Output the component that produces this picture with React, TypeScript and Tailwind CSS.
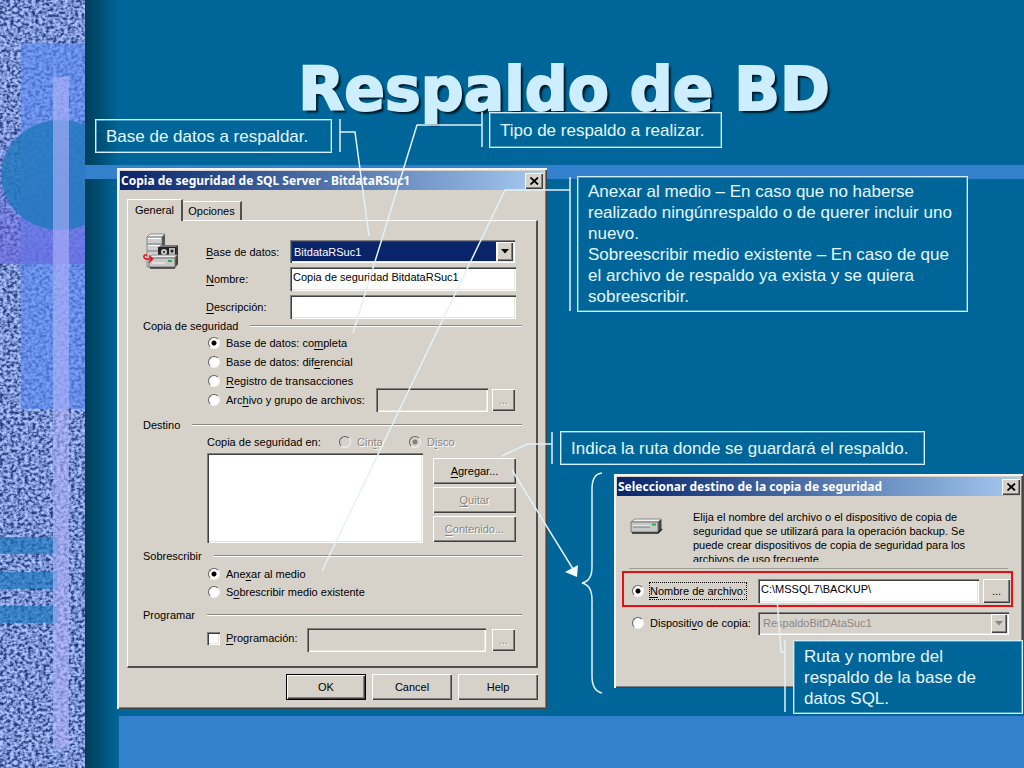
import { useState } from "react";
import type { ReactNode } from "react";
import clsx from "clsx";

const RAISED = "bg-[#d6d2ca] shadow-[inset_1px_1px_#ffffff,inset_-1px_-1px_#404040,inset_-2px_-2px_#808080]";
const SUNKEN = "shadow-[inset_1px_1px_#808080,inset_2px_2px_#404040,inset_-1px_-1px_#ffffff,inset_-2px_-2px_#e8e5df]";
const ETCHED = "text-[#8a8782] [text-shadow:1px_1px_#ffffff]";

/* text with the letter between underscores drawn as the access key */
function Access({ text }: { text: string }) {
    const [before, key, after] = text.split("_");
    return <>{before}<u className="underline-offset-2">{key}</u>{after}</>;
}

function TitleBar({ title }: { title: string }) {
    return (
        <div className="flex h-[19px] items-center justify-between bg-linear-to-r from-[#0a246a] to-[#a6caf0] pl-px">
            <h2 className="whitespace-nowrap font-['Noto_Sans',sans-serif] text-[12px] font-bold text-white">{title}</h2>
            <button aria-label="Cerrar" className={clsx("flex h-4 w-[18px] items-center justify-center", RAISED)}>
                <svg width="9" height="8" viewBox="0 0 9 8" stroke="#000" strokeWidth="1.8">
                    <path d="M0.5 0.5 8 7.5M8 0.5 0.5 7.5" />
                </svg>
            </button>
        </div>
    );
}

function Group({ title, children }: { title: string; children: ReactNode }) {
    return (
        <section>
            <div className="flex h-[14px] items-center gap-3">
                <h3>{title}</h3>
                <div className="h-0.5 flex-1 border-t border-b border-t-[#8a8782] border-b-white" />
            </div>
            {children}
        </section>
    );
}

function Radio({ name, text, checked, disabled, onChange }: { name: string; text: string; checked: boolean; disabled?: boolean; onChange?: () => void }) {
    return (
        <label className={clsx("flex items-center gap-1.5 whitespace-nowrap", disabled && ETCHED)}>
            <input
                type="radio"
                name={name}
                checked={checked}
                disabled={disabled}
                onChange={() => onChange?.()}
                className={clsx(
                    "size-3 shrink-0 appearance-none rounded-full border border-t-[#606060] border-r-[#f4f2ee] border-b-[#f4f2ee] border-l-[#606060]",
                    disabled
                        ? "bg-[#d6d2ca] checked:bg-[radial-gradient(circle,#808080_2px,#d6d2ca_3px)]"
                        : "bg-white checked:bg-[radial-gradient(circle,#000_2px,#fff_3px)]"
                )}
            />
            <span><Access text={text} /></span>
        </label>
    );
}

function Button({ text, disabled, className }: { text: string; disabled?: boolean; className?: string }) {
    return (
        <button disabled={disabled} className={clsx("flex items-center justify-center", RAISED, disabled && ETCHED, className)}>
            <span><Access text={text} /></span>
        </button>
    );
}

function Arrow({ color }: { color: string }) {
    return (
        <span className={clsx("pointer-events-none absolute top-0.5 right-0.5 bottom-0.5 flex w-4 items-center justify-center", RAISED)}>
            <svg width="8" height="5" viewBox="0 0 8 5" fill={color}><path d="M0 0h8L4 4.5z" /></svg>
        </span>
    );
}

function BackupDialog() {
    const [type, setType] = useState(0);
    const [media, setMedia] = useState(0);

    const types: string[] = ["Base de datos: co_m_pleta", "Base de datos: dif_e_rencial", "_R_egistro de transacciones"];

    return (
        <div className="absolute top-[168px] left-[117px] w-[430px] bg-[#d6d2ca] p-[3px] pr-1 pb-[9px] shadow-[inset_2px_2px_#f4f2ee,inset_-1px_-1px_#404040,inset_-2px_-2px_#808080]">
            <TitleBar title="Copia de seguridad de SQL Server - BitdataRSuc1" />

            <div className="mt-2 flex items-end px-[7px]" role="tablist">
                <button role="tab" aria-selected="true" className="relative top-px h-[22px] w-[56px] border-t border-r-2 border-l border-t-white border-r-[#505050] border-l-white bg-[#d6d2ca] pb-0.5">General</button>
                <button role="tab" aria-selected="false" className="h-[19px] w-[59px] border-t border-r-2 border-t-white border-r-[#505050]">Opciones</button>
            </div>

            <div className="mr-[5px] ml-[7px] border-t border-r-2 border-b-2 border-l border-t-white border-r-[#505050] border-b-[#505050] border-l-white pt-3 pr-[14px] pb-3 pl-[15px]">
                <div className="flex">
                    <ServerIcon />
                    <div className="ml-[27px] flex flex-1 flex-col gap-1 pt-[7px]">
                        <div className="flex items-center">
                            <label htmlFor="db" className="w-[84px]"><Access text="_B_ase de datos:" /></label>
                            <div className={clsx("relative h-[23px] w-[225px] bg-white p-0.5", SUNKEN)}>
                                <select id="db" className="block h-[19px] w-[204px] appearance-none bg-[#0a246a] px-0.5 text-white outline-none">
                                    <option>BitdataRSuc1</option>
                                </select>
                                <Arrow color="#000" />
                            </div>
                        </div>
                        <div className="flex items-center">
                            <label htmlFor="name" className="w-[84px]"><Access text="_N_ombre:" /></label>
                            <input id="name" defaultValue="Copia de seguridad BitdataRSuc1" className={clsx("h-6 w-[226px] bg-white px-[3px] pb-1 outline-none", SUNKEN)} />
                        </div>
                        <div className="flex items-center">
                            <label htmlFor="desc" className="w-[84px]"><Access text="_D_escripción:" /></label>
                            <input id="desc" className={clsx("h-6 w-[226px] bg-white px-[3px] outline-none", SUNKEN)} />
                        </div>
                    </div>
                </div>

                <Group title="Copia de seguridad">
                    <div className="flex flex-col pl-[65px]">
                        {types.map((item, i) => (
                            <div className="flex h-[19px] items-center" key={i}>
                                <Radio name="type" text={item} checked={type === i} onChange={() => setType(i)} />
                            </div>
                        ))}
                        <div className="flex h-5 items-center">
                            <div className="w-[168px]">
                                <Radio name="type" text="Arc_h_ivo y grupo de archivos:" checked={type === 3} onChange={() => setType(3)} />
                            </div>
                            <input aria-label="Archivo y grupo de archivos" disabled className={clsx("h-6 w-[112px]", SUNKEN)} />
                            <Button text="..." disabled className="ml-1 h-[22px] w-[23px]" />
                        </div>
                    </div>
                </Group>

                <div className="h-2" />
                <Group title="Destino">
                    <div className="pl-16">
                        <div className="flex h-5 items-center">
                            <span className="w-[132px]">Copia de seguridad en:</span>
                            <div className="w-[70px]"><Radio name="dest" text="Cin_t_a" checked={false} disabled /></div>
                            <Radio name="dest" text="D_i_sco" checked disabled />
                        </div>
                        <div className="flex gap-[10px] pt-px">
                            <select size={4} aria-label="Destinos" className={clsx("h-[90px] w-[216px] appearance-none bg-white outline-none", SUNKEN)} />
                            <div className="flex flex-col gap-[3px] pt-[5px]">
                                <Button text="_A_gregar..." className="h-[26px] w-[83px]" />
                                <Button text="_Q_uitar" disabled className="h-[26px] w-[83px]" />
                                <Button text="_C_ontenido..." disabled className="h-[26px] w-[83px]" />
                            </div>
                        </div>
                    </div>
                </Group>

                <div className="h-1.5" />
                <Group title="Sobrescribir">
                    <div className="flex flex-col pt-0.5 pl-[65px]">
                        <div className="flex h-[18px] items-center">
                            <Radio name="media" text="Ane_x_ar al medio" checked={media === 0} onChange={() => setMedia(0)} />
                        </div>
                        <div className="flex h-[18px] items-center">
                            <Radio name="media" text="S_o_brescribir medio existente" checked={media === 1} onChange={() => setMedia(1)} />
                        </div>
                    </div>
                </Group>

                <div className="h-[7px]" />
                <Group title="Programar">
                    <div className="flex h-8 items-center pt-1 pl-16">
                        <label className="flex w-[100px] items-center gap-1.5 pb-1">
                            <input type="checkbox" className={clsx("size-[13px] appearance-none bg-white checked:bg-[radial-gradient(circle,#000_2px,#fff_3px)]", SUNKEN)} />
                            <span><Access text="_P_rogramación:" /></span>
                        </label>
                        <input aria-label="Programación" disabled className={clsx("h-6 w-[179px]", SUNKEN)} />
                        <Button text="..." disabled className="ml-1.5 h-[22px] w-[23px]" />
                    </div>
                </Group>
            </div>

            <div className="mt-1.5 mr-[5px] flex justify-end gap-1.5">
                <Button text="OK" className="h-[26px] w-20 border border-black" />
                <Button text="Cancel" className="h-[26px] w-20" />
                <Button text="Help" className="h-[26px] w-20" />
            </div>
        </div>
    );
}

function DestinationDialog() {
    const [dest, setDest] = useState(0);

    return (
        <div className="absolute top-[474px] left-[614px] h-[214px] w-[409px] bg-[#d6d2ca] p-[3px] shadow-[inset_2px_2px_#f4f2ee,inset_-1px_-1px_#404040,inset_-2px_-2px_#808080]">
            <TitleBar title="Seleccionar destino de la copia de seguridad" />
            <div className="flex pt-[14px] pl-[13px]">
                <DriveIcon />
                <p className="ml-[30px] h-[52px] w-[300px] overflow-hidden leading-[14px]">
                    Elija el nombre del archivo o el dispositivo de copia de<br />
                    seguridad que se utilizará para la operación backup. Se<br />
                    puede crear dispositivos de copia de seguridad para los<br />
                    archivos de uso frecuente.
                </p>
            </div>
            <div className="mt-1.5 mr-3 ml-3 border-t border-[#a09d96]" />
            <div className="mt-0.5 ml-[5px] flex h-9 w-[391px] items-center border-2 border-[#e60f14] pt-1 pl-2">
                <div className="w-[126px] [&_span]:outline-1 [&_span]:outline-dotted [&_span]:outline-black">
                    <Radio name="target" text="_N_ombre de archivo:" checked={dest === 0} onChange={() => setDest(0)} />
                </div>
                <input aria-label="Nombre de archivo" defaultValue="C:\MSSQL7\BACKUP\" className={clsx("h-6 w-[221px] bg-white px-[3px] pb-1 outline-none", SUNKEN)} />
                <Button text="..." className="ml-1 h-6 w-[27px]" />
            </div>
            <div className="flex h-8 items-center pl-[15px]">
                <div className="w-[126px]">
                    <Radio name="target" text="Dispositi_v_o de copia:" checked={dest === 1} onChange={() => setDest(1)} />
                </div>
                <div className={clsx("relative h-[23px] w-[251px] p-0.5", SUNKEN)}>
                    <select disabled aria-label="Dispositivo de copia" className="block h-[19px] w-full appearance-none px-[3px] text-[#8a8782] opacity-100">
                        <option>RespaldoBitDAtaSuc1</option>
                    </select>
                    <Arrow color="#8a8782" />
                </div>
            </div>
        </div>
    );
}

function ServerIcon() {
    return (
        <svg width="36" height="38" viewBox="0 0 36 38">
            <path d="M4 4 7 1h15l-3 3z" fill="#f2f2f2" stroke="#8c8c8c" />
            <path d="M4 4h15v30H4z" fill="#cfcfcf" stroke="#8c8c8c" />
            <path d="M19 4 22 1v12h-3z" fill="#555" />
            <path d="M4 11h15M4 18h15" stroke="#777" />
            <path d="M5 5.500h13M5 12.500h13" stroke="#fff" />
            <path d="M15 15 18 12h17l-2 3z" fill="#777" />
            <path d="M15 14h18v9H15z" fill="#222" />
            <path d="M33 14 35 12v10l-2 2z" fill="#333" />
            <path d="M26 15h6v7h-6z" fill="#b9b9b9" />
            <circle cx="21" cy="19" r="3" fill="#ccc" />
            <circle cx="21" cy="19" r="1" fill="#111" />
            <circle cx="29" cy="18" r="1.500" fill="#222" />
            <path d="M32 25 35 22v9l-3 4z" fill="#444" />
            <path d="M6 25 9 22h25l-3 3z" fill="#efefef" stroke="#8c8c8c" />
            <path d="M6 25h26v9H6z" fill="#c8c8c8" stroke="#777" />
            <path d="M9 30h13" stroke="#f4f4f4" />
            <path d="M25 28h4" stroke="#1fb141" strokeWidth="2" />
            <path d="M7 35h25" stroke="#333" strokeWidth="1.500" />
            <path d="M4 22H2c-2 1-1 4 1 4h6M6 22.500 9.500 26 6 29.500" fill="none" stroke="#e3141e" strokeWidth="1.600" />
        </svg>
    );
}

function DriveIcon() {
    return (
        <svg width="33" height="17" viewBox="0 0 33 17" className="mt-2">
            <path d="M1 4 5 1h26l-3 3z" fill="#f1f1f1" stroke="#8e8e8e" />
            <path d="M28 4 31.500 1v10L28 15z" fill="#444" />
            <path d="M1 4h27v10H1z" fill="#c9c9c9" stroke="#777" />
            <path d="M3 8h17" stroke="#fff" />
            <path d="M3 9h17" stroke="#777" />
            <path d="M22 6.500h4" stroke="#25b04a" strokeWidth="2" />
            <path d="M2 15h26l4-4" stroke="#222" strokeWidth="1.500" fill="none" />
        </svg>
    );
}

function Callout({ className, children }: { className: string; children: ReactNode }) {
    return (
        <div className={clsx("absolute flex items-center border border-[#d4eff8] px-[10px] font-['Liberation_Sans',Arial,sans-serif] text-[17px] leading-[21px] text-[#e6f8ff] shadow-[inset_1px_1px_#4d9ac0,inset_-1px_-1px_#4d9ac0]", className)}>
            <p className="whitespace-nowrap">{children}</p>
        </div>
    );
}

function Fabric() {
    return (
        <svg width="85" height="100%" className="block h-full">
            <defs>
                <filter id="weave" x="0" y="0" width="100%" height="100%" colorInterpolationFilters="sRGB">
                    <feTurbulence type="fractalNoise" baseFrequency="0.28 0.34" numOctaves="2" seed="4" />
                    <feColorMatrix values="1 0 0 0 0  1 0 0 0 0  1 0 0 0 0  0 0 0 0 1" />
                    <feComponentTransfer>
                        <feFuncR type="table" tableValues="0.10 0.12 0.20 0.48 0.66 0.72 0.74" />
                        <feFuncG type="table" tableValues="0.16 0.20 0.30 0.58 0.74 0.80 0.82" />
                        <feFuncB type="table" tableValues="0.38 0.42 0.55 0.84 0.98 1 1" />
                    </feComponentTransfer>
                </filter>
                <linearGradient id="violet" x1="0" y1="0" x2="0" y2="1">
                    <stop offset="0" stopColor="#6a6ae0" stopOpacity="0" />
                    <stop offset="1" stopColor="#6a6ae0" stopOpacity="0.75" />
                </linearGradient>
            </defs>
            <rect width="85" height="100%" filter="url(#weave)" />
            <rect x="21" y="43" width="64" height="366" fill="#5c8cf5" opacity="0.65" />
            <rect y="120" width="85" height="144" fill="url(#violet)" />
            <ellipse cx="60" cy="175" rx="59" ry="55" fill="#1f78bd" opacity="0.8" />
            <rect y="537" width="58" height="17" fill="#1f78bd" opacity="0.7" />
            <rect y="572" width="58" height="17" fill="#1f78bd" opacity="0.7" />
            <rect y="606" width="58" height="17" fill="#1f78bd" opacity="0.7" />
            <rect x="53" y="77" width="16" height="673" fill="#b4b4fa" opacity="0.6" />
        </svg>
    );
}

/* leader lines, arrow and brace drawn over the windows */
function Leaders() {
    return (
        <svg className="pointer-events-none absolute inset-0 h-full w-full" fill="none" stroke="#e4f1f6" strokeWidth="1.500">
            <path d="M340 119v33M340 132h15l14 104" />
            <path d="M482 112v35M482 125h-65L353 333" />
            <path d="M570 177v134M570 190h-65L322 571" />
            <path d="M552 432v32M552 444h-25l-25 12" />
            <path d="M512 470 573 569" />
            <path d="M565 572 578 565 577 577z" fill="#f4fbff" stroke="none" />
            <path d="M602 473q-10 1-10 16v78q0 14-10 16q10 2 10 17v76q0 15 10 17" />
            <path d="M785 640v72M785 652h-4l-4-54" />
        </svg>
    );
}

export default function App() {
    return (
        <div className="relative flex min-h-screen w-full overflow-hidden bg-[#006699] font-['Liberation_Sans',Arial,sans-serif] text-[11px] leading-4 text-black">
            <aside className="w-[85px] shrink-0 self-stretch">
                <Fabric />
            </aside>
            <div className="w-[34px] shrink-0 bg-linear-to-r from-[#003e59] to-[#006699]" />
            <main className="flex flex-1 flex-col">
                <h1 className="h-[165px] pt-[49px] pr-[15px] text-center font-['DejaVu_Sans',sans-serif] text-[60px] leading-[80px] font-bold whitespace-nowrap text-[#cceeff] [-webkit-text-stroke:2px_#cceeff] [text-shadow:3px_3px_2px_#001a28]">
                    Respaldo de BD
                </h1>
                <div className="-ml-[34px] h-[14px] bg-[#3380cc]" />
                <div className="flex-1" />
                <div className="h-[52px] bg-[#3380cc]" />
            </main>

            <BackupDialog />
            <DestinationDialog />

            <Callout className="top-[119px] left-[95px] h-[34px] w-[237px]">Base de datos a respaldar.</Callout>
            <Callout className="top-[112px] left-[489px] h-[36px] w-[233px]">Tipo de respaldo a realizar.</Callout>
            <Callout className="top-[176px] left-[577px] h-[136px] w-[391px] bg-[#006699]">
                Anexar al medio – En caso que no haberse<br />
                realizado ningúnrespaldo o de querer incluir uno<br />
                nuevo.<br />
                Sobreescribir medio existente – En caso de que<br />
                el archivo de respaldo ya exista y se quiera<br />
                sobreescribir.
            </Callout>
            <Callout className="top-[431px] left-[560px] h-[34px] w-[365px]">Indica la ruta donde se guardará el respaldo.</Callout>
            <Callout className="top-[640px] left-[793px] h-[74px] w-[230px] bg-[#006699]">
                Ruta y nombre del<br />
                respaldo de la base de<br />
                datos SQL.
            </Callout>

            <Leaders />
        </div>
    );
}
